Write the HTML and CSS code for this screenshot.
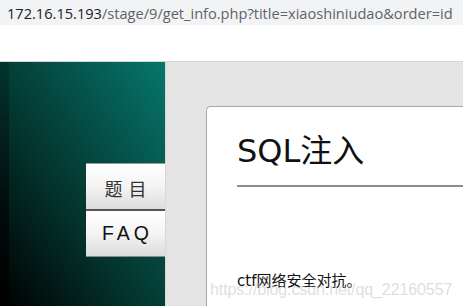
FILE: index.html
```html
<!DOCTYPE html>
<html>
<head>
<meta charset="utf-8">
<link rel="stylesheet" href="styles.css">
</head>
<body>
<div class="addr"><span class="host">172.16.15.193</span>/stage/9/get_info.php?title=xiaoshiniudao&amp;order=id</div>
<div class="gap"></div>
<div class="page">
  <div class="sidebar">
    <div class="edge"></div>
    <nav class="nav">
      <a class="btn btn-cn">题 目</a>
      <a class="btn btn-faq">FAQ</a>
    </nav>
  </div>
  <div class="main">
    <div class="card">
      <h1 class="title">SQL注入</h1>
      <hr class="rule">
      <p class="desc">ctf网络安全对抗。</p>
    </div>
  </div>
  <div class="watermark">https://blog.csdn.net/qq_22160557</div>
</div>
</body>
</html>
```
FILE: styles.css
```css
html, body {
  margin: 0;
  padding: 0;
  background: #fff;
  overflow: hidden;
  width: 463px;
  height: 306px;
}
.addr {
  height: 25px;
  background: #f1f3f4;
  color: #5f6368;
  font-family: "Open Sans", "Noto Sans", sans-serif;
  font-size: 14.6px;
  line-height: 26px;
  padding-left: 7px;
  white-space: nowrap;
}
.host { color: #202124; }
.gap {
  height: 36px;
  background: #fff;
  border-bottom: 1px solid #d6d6d6;
}
.page {
  position: relative;
  display: flex;
  height: 244px;
}
.sidebar {
  width: 165px;
  flex: none;
  display: flex;
  background: linear-gradient(to top right, #000 0%, #03322c 40%, #07766c 100%);
}
.edge {
  width: 9px;
  background: linear-gradient(to bottom, #03332e, #010a08 60%, #000);
  opacity: 0.9;
}
.nav {
  margin-top: 101px;
  margin-left: 77px;
  display: flex;
  flex-direction: column;
  width: 79px;
}
.btn {
  display: flex;
  align-items: center;
  justify-content: center;
  background: linear-gradient(to bottom, #ffffff 0%, #f4f4f4 50%, #dcdcdc 100%);
  color: #111;
  font-family: "Liberation Sans", Arial, sans-serif;
  box-sizing: border-box;
}
.btn-cn {
  border-top: 1px solid #9a9a9a;
  border-bottom: 2px solid #555;
  height: 48px;
  font-family: "Noto Sans CJK SC", sans-serif;
  font-size: 18px;
  color: #333;
  letter-spacing: 1px;
  padding-left: 1px;
  padding-top: 2px;
}
.btn-faq {
  border-bottom: 1px solid #8a8a8a;
  height: 46px;
  font-size: 19.5px;
  letter-spacing: 4px;
  padding-left: 4px;
}
.main {
  flex: 1;
  background: #e4e4e4;
  padding: 44px 0 0 40px;
  border-left: 1px solid #d8d8d8;
  min-width: 0;
}
.card {
  background: #fff;
  border: 1px solid #a8a8a8;
  border-right: none;
  border-bottom: none;
  border-radius: 5px 0 0 0;
  height: 100%;
  padding: 0 0 0 30px;
  box-sizing: border-box;
}
.title {
  margin: 0;
  padding-top: 24px;
  font-family: "DejaVu Sans", "Noto Sans CJK SC", sans-serif;
  font-weight: normal;
  font-size: 32px;
  line-height: 40px;
  color: #111;
}
.rule {
  margin: 14px 0 0 0;
  border: none;
  border-top: 2px solid #8c8c8c;
  height: 0;
}
.desc {
  margin: 84px 0 0 0;
  font-family: "DejaVu Sans", "Noto Sans CJK SC", sans-serif;
  font-size: 15px;
  line-height: 20px;
  color: #111;
}
.watermark {
  position: absolute;
  left: 210px;
  top: 219px;
  font-family: "Liberation Sans", Arial, sans-serif;
  font-size: 16px;
  letter-spacing: -0.1px;
  color: rgba(190, 190, 190, 0.5);
  white-space: nowrap;
}
```
